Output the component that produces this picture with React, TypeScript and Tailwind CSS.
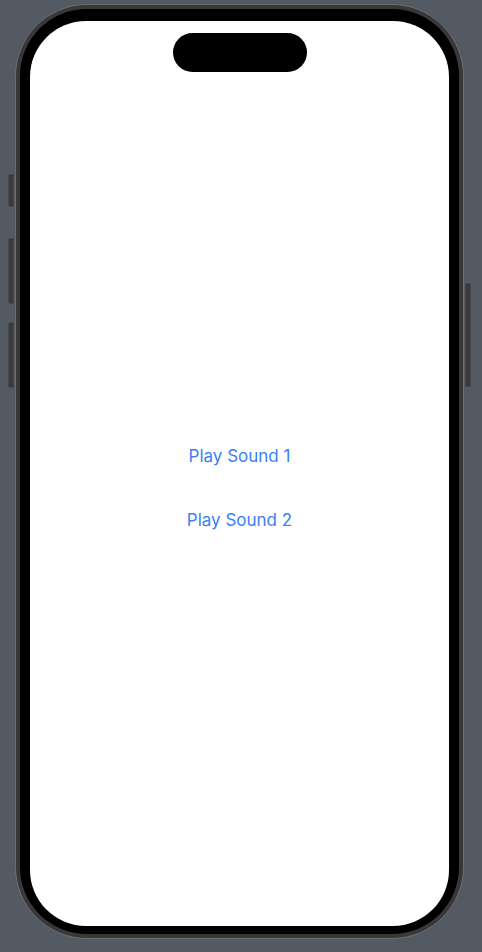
import React from "react";

export default function App() {
  return (
    <div className="relative w-[482px] h-[952px] bg-[#545a63] overflow-hidden" style={{ fontFamily: "Inter, 'Noto Sans', sans-serif" }}>
      {/* side buttons */}
      <div className="absolute left-[8px] top-[174px] w-[6px] h-[33px] rounded-l-[2px] bg-[#3a3a3a] border border-[#4a4a4a]" />
      <div className="absolute left-[8px] top-[238px] w-[6px] h-[66px] rounded-l-[2px] bg-[#3a3a3a] border border-[#4a4a4a]" />
      <div className="absolute left-[8px] top-[322px] w-[6px] h-[66px] rounded-l-[2px] bg-[#3a3a3a] border border-[#4a4a4a]" />
      <div className="absolute left-[465px] top-[283px] w-[6px] h-[104px] rounded-r-[2px] bg-[#3a3a3a] border border-[#4a4a4a]" />

      <div className="relative ml-[15px] mt-[4px] w-[449px] h-[935px] rounded-[72px] bg-[#383838] border border-[#6e6e6e] p-[4px] flex">
        <div className="flex-1 flex rounded-[67px] bg-black px-[10px] pt-[12px] pb-[8px]">
          <div className="relative flex-1 rounded-[56px] bg-white flex flex-col items-center pt-[424px] gap-[42px]">
            <div className="absolute top-[12px] left-1/2 -translate-x-1/2 w-[134px] h-[39px] rounded-full bg-black" />
            <button className="text-[17px] leading-[22px] text-[#3a80f6]">Play Sound 1</button>
            <button className="text-[17px] leading-[22px] text-[#3a80f6]">Play Sound 2</button>
          </div>
        </div>
      </div>
    </div>
  );
}
